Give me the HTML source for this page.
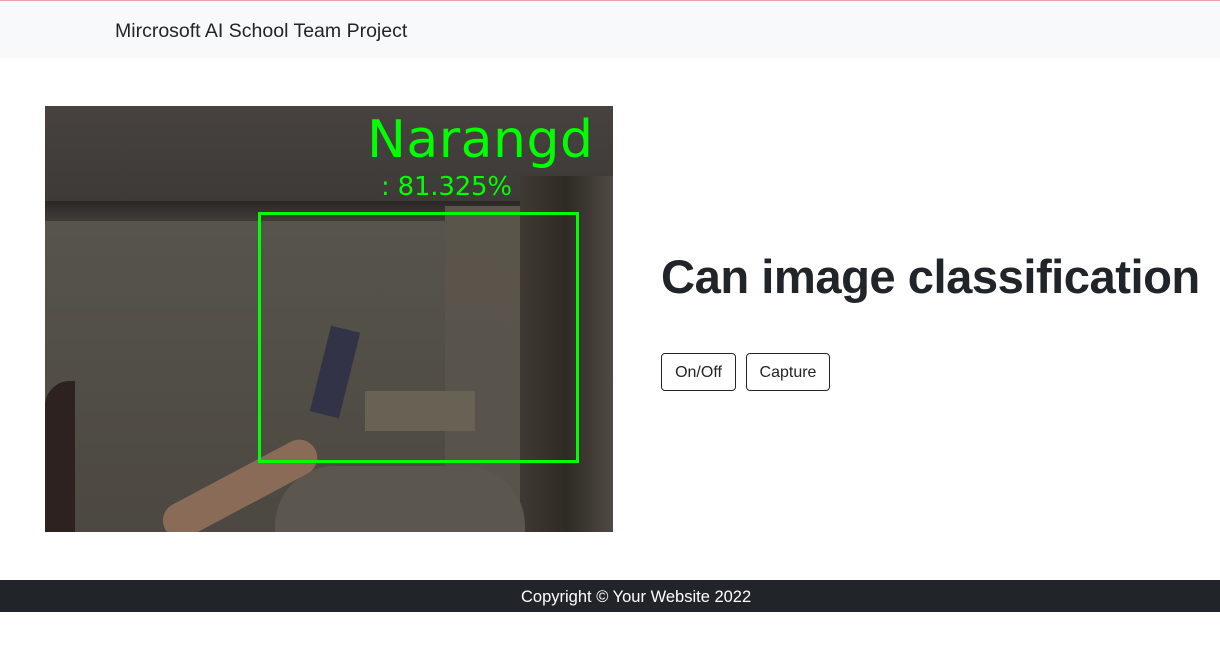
<!DOCTYPE html>
<html><head><meta charset="utf-8"><style>
*{margin:0;padding:0;box-sizing:border-box}
body{width:1220px;height:657px;background:#fff;font-family:"Liberation Sans",sans-serif;position:relative;overflow:hidden;color:#212529}
.nav{position:absolute;top:0;left:0;width:1220px;height:58px;background:#f8f9fa;border-top:1px solid #e6a0a8}
.nav span{position:absolute;left:115px;top:19px;font-size:19.5px;color:#212529}
.img{position:absolute;left:45px;top:106px;width:568px;height:426px;overflow:hidden;background:#4f4a43}
h1{position:absolute;left:661px;top:250px;font-size:47.2px;font-weight:bold;letter-spacing:-0.5px;white-space:nowrap}
.btn{position:absolute;top:353px;height:38px;border:1px solid #212529;border-radius:4px;font-size:16px;line-height:38px;text-align:center;background:#fff}
.foot{position:absolute;left:0;top:580px;width:1220px;height:32px;background:#212529;color:#fff;font-size:16.5px;line-height:34px}
.foot span{position:absolute;left:521px;top:0;white-space:nowrap}
</style></head><body>
<div class="nav"><span>Mircrosoft AI School Team Project</span></div>
<div class="img">
<div style="position:absolute;left:0;top:0;width:568px;height:95px;background:linear-gradient(180deg,#47423f,#3e3a37)"></div>
<div style="position:absolute;left:0;top:95px;width:568px;height:20px;background:linear-gradient(180deg,#2a2725,#403c38)"></div>
<div style="position:absolute;left:0;top:115px;width:420px;height:311px;background:linear-gradient(180deg,#57544c,#4c4841)"></div>
<div style="position:absolute;left:400px;top:100px;width:80px;height:326px;background:linear-gradient(180deg,#5a554b,#58534b)"></div>
<div style="position:absolute;left:475px;top:70px;width:93px;height:356px;background:linear-gradient(90deg,#3f3a33,#2e2a24 50%,#4f4a44)"></div>
<div style="position:absolute;left:0;top:275px;width:30px;height:151px;background:#2d2220;border-radius:25px 0 0 0"></div>
<div style="position:absolute;left:320px;top:285px;width:110px;height:40px;background:#686255"></div>
<div style="position:absolute;left:230px;top:360px;width:250px;height:66px;background:#5c574e;border-radius:60px 60px 0 0"></div>
<div style="position:absolute;left:120px;top:405px;width:170px;height:36px;background:#8a6b58;transform:rotate(-28deg);transform-origin:left;border-radius:18px"></div>
<div style="position:absolute;left:275px;top:222px;width:30px;height:88px;background:#323347;transform:rotate(14deg)"></div>
<div style="position:absolute;left:213px;top:106px;width:321px;height:251px;border:3px solid #00ff00"></div>
<div style="position:absolute;left:322px;top:4px;font-size:52px;color:#00ff00;font-family:'DejaVu Sans',sans-serif;letter-spacing:0.5px">Narangd</div>
<div style="position:absolute;left:336px;top:66px;font-size:26px;color:#00ff00;font-family:'DejaVu Sans',sans-serif;letter-spacing:-0.2px">: 81.325%</div>
</div>
<h1>Can image classification</h1>
<div class="btn" style="left:661px;width:75px">On/Off</div>
<div class="btn" style="left:746px;width:84px">Capture</div>
<div class="foot"><span>Copyright © Your Website 2022</span></div>
</body></html>
